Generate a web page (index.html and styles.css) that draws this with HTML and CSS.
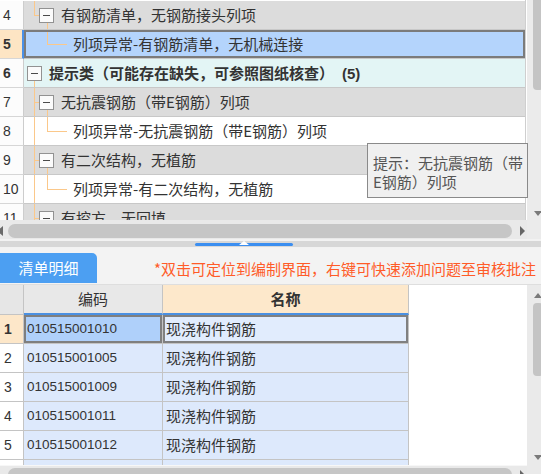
FILE: index.html
```html
<!DOCTYPE html>
<html lang="zh-CN">
<head>
<meta charset="utf-8">
<title>审核</title>
<link rel="stylesheet" href="styles.css">
</head>
<body>
<div class="app">
  <section class="top">
    <div class="top-main">
      <div class="tree">
        <div class="trow"><div class="num">4</div><div class="cell group end"><span class="box"></span><span class="txt">有钢筋清单，无钢筋接头列项</span></div></div>
        <div class="trow sel"><div class="num">5</div><div class="cell child nocat"><span class="txt">列项异常-有钢筋清单，无机械连接</span></div></div>
        <div class="trow cat"><div class="num">6</div><div class="cell category"><span class="box"></span><span class="txt">提示类（可能存在缺失，可参照图纸核查）<span class="count">(5)</span></span></div></div>
        <div class="trow"><div class="num">7</div><div class="cell group"><span class="box"></span><span class="txt">无抗震钢筋（带E钢筋）列项</span></div></div>
        <div class="trow"><div class="num">8</div><div class="cell child"><span class="txt">列项异常-无抗震钢筋（带E钢筋）列项</span></div></div>
        <div class="trow"><div class="num">9</div><div class="cell group"><span class="box"></span><span class="txt">有二次结构，无植筋</span></div></div>
        <div class="trow"><div class="num">10</div><div class="cell child"><span class="txt">列项异常-有二次结构，无植筋</span></div></div>
        <div class="trow"><div class="num">11</div><div class="cell group"><span class="box"></span><span class="txt">有挖方，无回填</span></div></div>
      </div>
      <div class="hscroll">
        <span class="arrow-left"></span>
        <span class="hthumb"></span>
        <span class="arrow-right"></span>
      </div>
    </div>
    <div class="vscroll top-v">
      <span class="vthumb top-thumb"></span>
      <span class="arrow-down top-down"></span>
    </div>
  </section>

  <div class="splitter"><div class="splitbar"><span class="grip"></span></div></div>

  <div class="toolbar">
    <div class="tab">清单明细</div>
    <div class="hint">*双击可定位到编制界面，右键可快速添加问题至审核批注</div>
  </div>

  <section class="bottom">
    <div class="bottom-main">
      <div class="table-area">
        <div class="btable">
          <div class="bc hnum"></div><div class="bc hcode">编码</div><div class="bc hname">名称</div>
          <div class="bc bnum selnum">1</div><div class="bc code selcode">010515001010</div><div class="bc name selname">现浇构件钢筋</div>
          <div class="bc bnum">2</div><div class="bc code">010515001005</div><div class="bc name">现浇构件钢筋</div>
          <div class="bc bnum">3</div><div class="bc code">010515001009</div><div class="bc name">现浇构件钢筋</div>
          <div class="bc bnum">4</div><div class="bc code">010515001011</div><div class="bc name">现浇构件钢筋</div>
          <div class="bc bnum">5</div><div class="bc code">010515001012</div><div class="bc name">现浇构件钢筋</div>
          <div class="bc bnum"></div><div class="bc code"></div><div class="bc name"></div>
        </div>
      </div>
      <div class="hscroll bottom-h">
        <span class="hthumb"></span>
        <span class="arrow-right"></span>
      </div>
    </div>
    <div class="vscroll bottom-v">
      <span class="arrow-up"></span>
      <span class="vthumb bottom-thumb"></span>
      <span class="arrow-down bottom-down"></span>
    </div>
  </section>

  <div class="tooltip">提示：无抗震钢筋（带<br>E钢筋）列项</div>
</div>
</body>
</html>
```

FILE: styles.css
```css
* { box-sizing: border-box; }
html, body { margin: 0; padding: 0; }
body {
  width: 541px;
  height: 474px;
  overflow: hidden;
  background: #f3f3f3;
  font-family: "Noto Sans CJK SC", "Liberation Sans", sans-serif;
  font-size: 15px;
  color: #333;
}
.app {
  position: relative;
  width: 541px;
  height: 474px;
  display: flex;
  flex-direction: column;
  overflow: hidden;
}

/* ---------- top tree grid ---------- */
.top {
  --tl: #fbc88a;
  display: flex;
  height: 239px;
  flex: none;
  background: #fff;
}
.top-main {
  width: 527px;
  display: flex;
  flex-direction: column;
}
.tree {
  height: 220px;
  width: 526px;
  overflow: hidden;
  padding-top: 1px;
  border-right: 1px solid #cfcfcf;
  background: #fff;
}
.trow {
  display: flex;
  height: 29px;
}
.num {
  width: 24px;
  flex: none;
  display: flex;
  align-items: center;
  padding-left: 3px;
  font-family: "Liberation Sans", sans-serif;
  font-size: 14px;
  color: #333;
  background: #fcfcfc;
  border-right: 1px solid #cdcdcd;
  border-bottom: 1px solid #d6d6d6;
}
.cell {
  flex: 1;
  min-width: 0;
  display: flex;
  align-items: center;
  white-space: nowrap;
  overflow: hidden;
  border-bottom: 1px solid #c8c8c8;
  line-height: 20px;
}
.box {
  flex: none;
  width: 15px;
  height: 15px;
  border: 1px solid #929292;
  background: #fbfbfb;
  display: flex;
  align-items: center;
  justify-content: center;
}
.box::after {
  content: "";
  width: 7px;
  height: 1px;
  background: #4a4a4a;
}
.txt { margin-left: 7px; }

.group {
  padding-left: 15px;
  background:
    linear-gradient(var(--tl), var(--tl)) 10px 0 / 1px 100% no-repeat,
    linear-gradient(var(--tl), var(--tl)) 10px 50% / 6px 1px no-repeat,
    linear-gradient(var(--tl), var(--tl)) 23px 100% / 1px 7px no-repeat,
    #dcdcdc;
}
.group.end {
  background:
    linear-gradient(var(--tl), var(--tl)) 10px 0 / 1px 50% no-repeat,
    linear-gradient(var(--tl), var(--tl)) 10px 50% / 6px 1px no-repeat,
    linear-gradient(var(--tl), var(--tl)) 23px 100% / 1px 7px no-repeat,
    #dcdcdc;
}
.child {
  padding-left: 49px;
  background:
    linear-gradient(var(--tl), var(--tl)) 10px 0 / 1px 100% no-repeat,
    linear-gradient(var(--tl), var(--tl)) 23px 0 / 1px 50% no-repeat,
    linear-gradient(var(--tl), var(--tl)) 23px 50% / 20px 1px no-repeat,
    #fff;
}
.child .txt { margin-left: 0; }
.sel .child.nocat {
  box-shadow: inset 0 0 0 2px #7b7b7b;
  background:
    linear-gradient(var(--tl), var(--tl)) 23px 0 / 1px 50% no-repeat,
    linear-gradient(var(--tl), var(--tl)) 23px 50% / 20px 1px no-repeat,
    #b4d4fc;
}
.sel .num {
  background: #fde5c4;
  font-weight: bold;
  border-right: 2px solid #4a90e8;
}
.category {
  padding-left: 3px;
  font-weight: bold;
  background:
    linear-gradient(var(--tl), var(--tl)) 10px 100% / 1px 7px no-repeat,
    #e3f5f5;
}
.cat .num { font-weight: bold; }
.count { margin-left: 8px; font-family: "Liberation Sans", sans-serif; font-weight: bold; }

/* ---------- scrollbars ---------- */
.hscroll {
  height: 19px;
  display: flex;
  align-items: flex-start;
  padding-top: 4px;
  background: #e9e9e9;
  flex: none;
}
.hthumb {
  flex: none;
  margin-left: 8px;
  width: 504px;
  height: 14px;
  border-radius: 7px;
  background: #c6c6c6;
}
.arrow-left {
  flex: none;
  margin-left: -3px;
  margin-top: 2px;
  width: 0;
  height: 0;
  border-top: 5px solid transparent;
  border-bottom: 5px solid transparent;
  border-right: 6px solid #6a6a6a;
}
.arrow-left + .hthumb { margin-left: 5px; }
.arrow-right {
  flex: none;
  margin-left: 8px;
  margin-top: 2px;
  width: 0;
  height: 0;
  border-top: 5px solid transparent;
  border-bottom: 5px solid transparent;
  border-left: 5px solid #666;
}
.vscroll {
  width: 14px;
  flex: none;
  display: flex;
  flex-direction: column;
  background: #ebebeb;
}
.vthumb {
  margin-left: 6px;
  width: 10px;
  background: #c4c4c4;
  border-radius: 4px;
  flex: none;
}
.top-thumb { height: 90px; border-radius: 0 0 4px 4px; }
.arrow-down, .arrow-up {
  margin-left: 7px;
  width: 0;
  height: 0;
  border-left: 4px solid transparent;
  border-right: 4px solid transparent;
  flex: none;
}
.arrow-down { border-top: 5px solid #7a7a7a; }
.arrow-up { border-bottom: 5px solid #7a7a7a; }
.top-down { margin-top: 121px; }

/* ---------- splitter ---------- */
.splitter {
  height: 9px;
  flex: none;
  padding-top: 2px;
  background: #f2f2f2;
}
.splitbar {
  height: 6px;
  background: #d7d7d7;
  display: flex;
  align-items: center;
}
.grip {
  margin-left: 195px;
  width: 98px;
  height: 3px;
  border-radius: 2px;
  background: #3b8ef0;
  display: flex;
  justify-content: center;
}
.grip::after {
  content: "";
  margin-top: -2px;
  width: 0;
  height: 0;
  border-left: 5px solid transparent;
  border-right: 5px solid transparent;
  border-bottom: 4px solid #fff;
}

/* ---------- toolbar ---------- */
.toolbar {
  height: 37px;
  flex: none;
  display: flex;
  align-items: flex-end;
  padding-bottom: 1px;
  background: #f3f3f3;
  border-bottom: 1px solid #dedede;
}
.tab {
  flex: none;
  width: 97px;
  height: 30px;
  background: #4c9ff2;
  color: #fff;
  border-radius: 0 5px 0 0;
  display: flex;
  align-items: center;
  justify-content: center;
  line-height: 20px;
}
.hint {
  flex: none;
  margin-left: 57px;
  height: 30px;
  display: flex;
  align-items: center;
  color: #ff5b28;
  white-space: nowrap;
}

/* ---------- bottom grid ---------- */
.bottom {
  display: flex;
  height: 189px;
  flex: none;
  overflow: hidden;
}
.bottom-main {
  width: 527px;
  display: flex;
  flex-direction: column;
}
.table-area {
  height: 180px;
  flex: none;
  overflow: hidden;
  background: #fff;
}
.btable {
  display: grid;
  width: 409px;
  grid-template-columns: 24px 139px 246px;
  grid-template-rows: 30px;
  grid-auto-rows: 29px;
}
.bc {
  display: flex;
  align-items: center;
  border-right: 1px solid #c4c4c4;
  border-bottom: 1px solid #c4c4c4;
  white-space: nowrap;
  overflow: hidden;
  line-height: 20px;
}
.hnum { background: #e6e6e6; }
.hcode {
  background: #e8e8e8;
  justify-content: center;
  border-bottom: 2px solid #4a90e2;
}
.hname {
  background: #fde8cb;
  justify-content: center;
  font-weight: bold;
  border-bottom: 2px solid #4a90e2;
}
.bnum {
  background: #fff;
  padding-left: 4px;
  font-family: "Liberation Sans", sans-serif;
  font-size: 14px;
}
.selnum { background: #fde7c9; font-weight: bold; }
.code {
  background: #dde9fc;
  padding-left: 3px;
  font-family: "Liberation Sans", sans-serif;
  font-size: 13.5px;
}
.name {
  background: #dde9fc;
  padding-left: 3px;
}
.selcode {
  background: #afd0fa;
  box-shadow: inset 0 0 0 2px #7f7f7f;
}
.selname {
  background: #e1ecfd;
  box-shadow: inset 0 0 0 2px #808080;
}
.bottom-h {
  height: 20px;
  padding-top: 2px;
  border-top: 1px solid #f7f7f7;
}
.bottom-h .hthumb { margin-left: 8px; }
.bottom-v { padding-top: 8px; background: #eaeaea; }
.bottom-thumb { margin-top: 5px; height: 73px; }
.bottom-down { margin-top: 79px; }

/* ---------- tooltip ---------- */
.tooltip {
  position: absolute;
  left: 367px;
  top: 143px;
  width: 161px;
  height: 55px;
  padding: 9px 3px 0 5px;
  background: #f0f0f0;
  border: 1px solid #8a8a8a;
  color: #555;
  line-height: 19px;
  white-space: nowrap;
}
```
